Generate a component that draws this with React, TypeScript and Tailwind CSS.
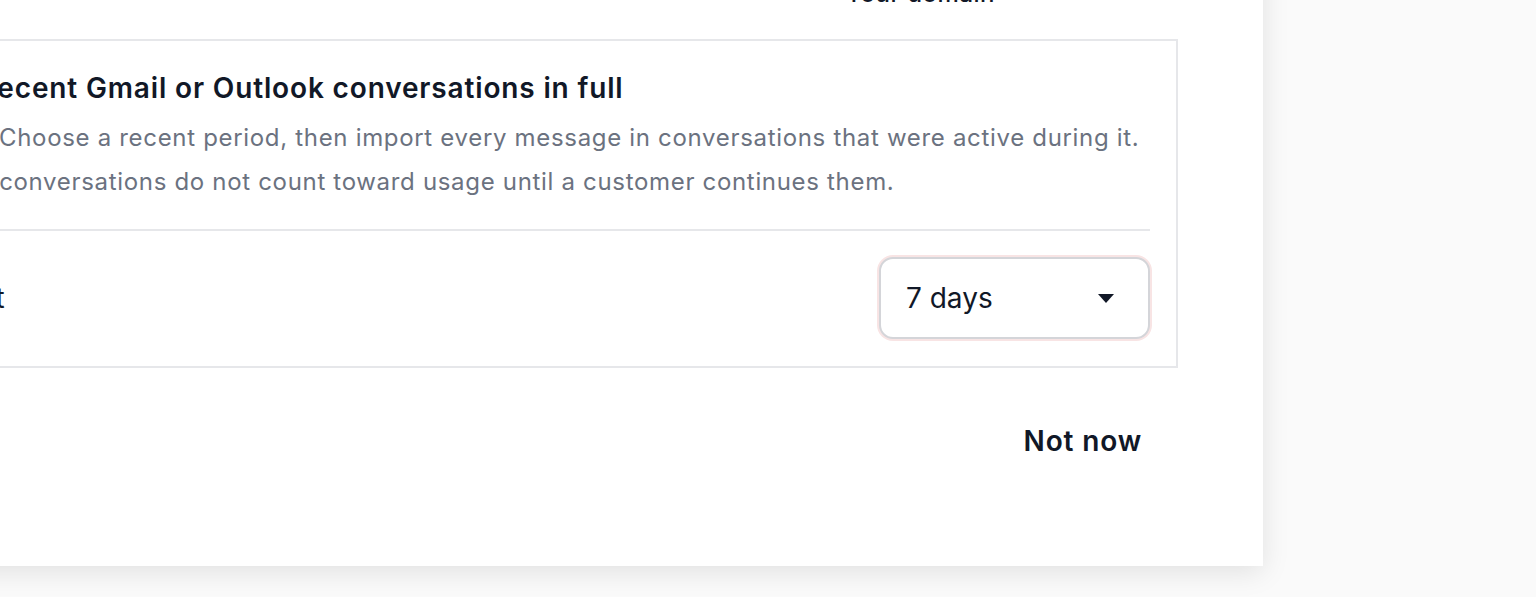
export default function App() {
  return (
    <div
      className="h-[597px] w-[1536px] overflow-hidden bg-[#fafafa]"
      style={{ fontFamily: 'Inter, "Noto Sans", sans-serif' }}
    >
      <div className="ml-[-167px] mt-[-60px] w-[1430px] bg-white pl-[23px] pr-[85px] pt-[36px] pb-[93px] shadow-[0_6px_26px_rgba(0,0,0,0.1)]">
        <div className="mb-[27px] flex h-[36px] justify-end pr-[183px]">
          <span className="text-[24px] font-medium leading-[36px] tracking-[0.5px] text-[#111827]">Your domain</span>
        </div>

        <div className="border-2 border-[#e6e7ea] px-[26px] pt-[29px] pb-[27px]">
          <h3 className="text-[28px] font-semibold leading-[36px] tracking-[0.85px] text-[#111827]">
            Import recent Gmail or Outlook conversations in full
          </h3>
          <p className="mt-[10px] text-[24px] leading-[44px] tracking-[0.68px] text-[#6b7280]">
            Optional. Choose a recent period, then import every message in conversations that were active during it.
            Imported conversations do not count toward usage until a customer continues them.
          </p>

          <div className="mt-[25px] h-[2px] bg-[#e6e7ea]" />

          <div className="mt-[26px] flex items-center justify-between">
            <span className="text-[28px] text-[#111827]">Sync last</span>
            <button className="flex h-[82px] w-[271px] items-center justify-between rounded-[14px] border-2 border-[#d4d5d9] bg-white pl-[25px] pr-[34px] shadow-[0_0_0_2px_#f8e4e4]">
              <span className="text-[28px] text-[#111827]">7 days</span>
              <svg width="16" height="9" viewBox="0 0 16 9">
                <path d="M0 0h16L8 9z" fill="#111827" />
              </svg>
            </button>
          </div>
        </div>

        <div className="mt-[41px] flex justify-end">
          <button className="h-[64px] px-[36px] text-[28px] font-semibold tracking-[0.85px] text-[#111827]">Not now</button>
        </div>
      </div>
    </div>
  );
}
